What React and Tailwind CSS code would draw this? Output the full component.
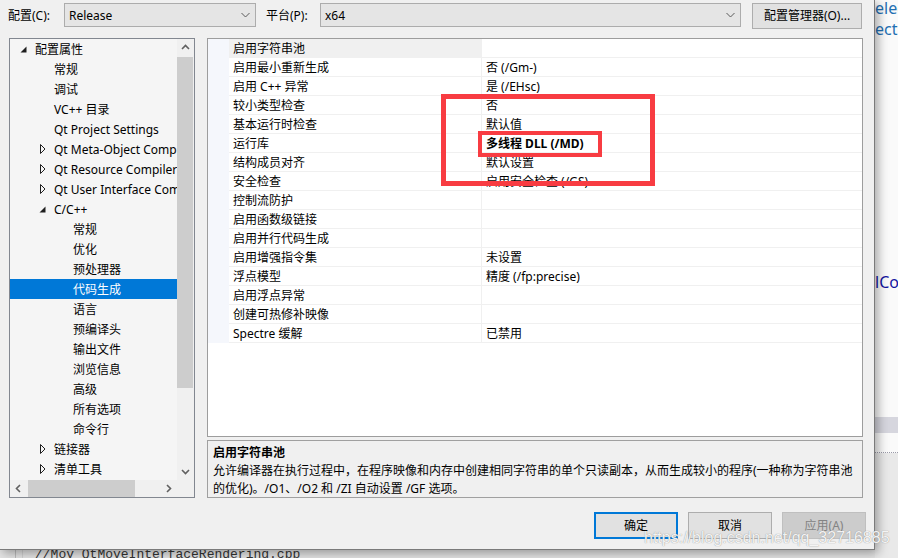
import React from "react"

const ui = "font-['Noto_Sans','Noto_Sans_CJK_SC',sans-serif] text-[12px]"

const treeItems = [
  { label: "配置属性", level: 0, arrow: "open" },
  { label: "常规", level: 1 },
  { label: "调试", level: 1 },
  { label: "VC++ 目录", level: 1 },
  { label: "Qt Project Settings", level: 1 },
  { label: "Qt Meta-Object Compiler", level: 1, arrow: "closed" },
  { label: "Qt Resource Compiler", level: 1, arrow: "closed" },
  { label: "Qt User Interface Compiler", level: 1, arrow: "closed" },
  { label: "C/C++", level: 1, arrow: "open" },
  { label: "常规", level: 2 },
  { label: "优化", level: 2 },
  { label: "预处理器", level: 2 },
  { label: "代码生成", level: 2, selected: true },
  { label: "语言", level: 2 },
  { label: "预编译头", level: 2 },
  { label: "输出文件", level: 2 },
  { label: "浏览信息", level: 2 },
  { label: "高级", level: 2 },
  { label: "所有选项", level: 2 },
  { label: "命令行", level: 2 },
  { label: "链接器", level: 1, arrow: "closed" },
  { label: "清单工具", level: 1, arrow: "closed" },
]

const levelPad = ["pl-[10px]", "pl-[29px]", "pl-[48px]"]

const props = [
  ["启用字符串池", ""],
  ["启用最小重新生成", "否 (/Gm-)"],
  ["启用 C++ 异常", "是 (/EHsc)"],
  ["较小类型检查", "否"],
  ["基本运行时检查", "默认值"],
  ["运行库", "多线程 DLL (/MD)", true],
  ["结构成员对齐", "默认设置"],
  ["安全检查", "启用安全检查 (/GS)"],
  ["控制流防护", ""],
  ["启用函数级链接", ""],
  ["启用并行代码生成", ""],
  ["启用增强指令集", "未设置"],
  ["浮点模型", "精度 (/fp:precise)"],
  ["启用浮点异常", ""],
  ["创建可热修补映像", ""],
  ["Spectre 缓解", "已禁用"],
]

const ScrollArrow = ({ dir }) => {
  const d = {
    up: "M1 6 L4.5 2.5 L8 6",
    down: "M1 3 L4.5 6.5 L8 3",
    left: "M6 1 L2.5 4.5 L6 8",
    right: "M3 1 L6.5 4.5 L3 8",
  }[dir]
  return (
    <svg width="9" height="9" viewBox="0 0 9 9">
      <path d={d} fill="none" stroke="#606060" strokeWidth="1.6" />
    </svg>
  )
}

const SelectChevron = () => (
  <svg width="9" height="6" viewBox="0 0 9 6">
    <path d="M0.5 1 L4.5 5 L8.5 1" fill="none" stroke="#5a5a5a" strokeWidth="1" />
  </svg>
)

const TreeArrow = ({ kind }) => {
  if (kind === "open")
    return (
      <svg width="7" height="7" viewBox="0 0 7 7" className="mt-[1px]">
        <path d="M6.5 0.5 V6.5 H0.5 Z" fill="#1e1e1e" />
      </svg>
    )
  if (kind === "closed")
    return (
      <svg width="6" height="10" viewBox="0 0 6 10" className="ml-[1px]">
        <path d="M0.5 0.5 L5 5 L0.5 9.5 Z" fill="none" stroke="#1e1e1e" strokeWidth="1" />
      </svg>
    )
  return null
}

const Tree = () => (
  <div className="w-[186px] h-[460px] border border-[#828790] flex flex-col">
    <div className="flex flex-1 min-h-0">
      <div className="flex-1 min-w-0 bg-[#f5f5f5] overflow-hidden">
        {treeItems.map((it, i) => (
          <div
            key={i}
            className={`h-[20px] flex items-center whitespace-nowrap ${levelPad[it.level]} ${it.selected ? "bg-[#0078d7] text-white" : "text-black"}`}
          >
            <div className="w-[15px] shrink-0 flex items-center">
              <TreeArrow kind={it.arrow} />
            </div>
            <span className="shrink-0 leading-[20px] pt-[1px]">{it.label}</span>
          </div>
        ))}
      </div>
      <div className="w-[17px] shrink-0 bg-[#f0f0f0] flex flex-col">
        <div className="h-[17px] flex items-center justify-center">
          <ScrollArrow dir="up" />
        </div>
        <div className="mt-[1px] h-[331px] bg-[#cdcdcd] mr-[1px]" />
        <div className="flex-1" />
        <div className="h-[17px] flex items-center justify-center">
          <ScrollArrow dir="down" />
        </div>
      </div>
    </div>
    <div className="h-[17px] flex">
      <div className="flex-1 bg-[#f0f0f0] flex">
        <div className="w-[17px] flex items-center justify-center">
          <ScrollArrow dir="left" />
        </div>
        <div className="ml-[1px] w-[107px] bg-[#cdcdcd]" />
        <div className="flex-1" />
        <div className="w-[17px] flex items-center justify-center">
          <ScrollArrow dir="right" />
        </div>
      </div>
      <div className="w-[17px] bg-[#f0f0f0]" />
    </div>
  </div>
)

const PropGrid = () => (
  <div className="h-[399px] border border-[#9d9d9d] bg-white flex flex-col">
    {props.map(([name, value, bold], i) => (
      <div key={i} className="flex h-[19px]">
        <div className="w-[21px] bg-[#f5f7fc]" />
        <div
          className={`w-[253px] border-b border-r border-[#f0f0f0] pl-[4px] pt-[2px] flex items-center whitespace-nowrap ${i === 0 ? "bg-[#f0f0f0]" : ""}`}
        >
          {name}
        </div>
        <div
          className={`flex-1 border-b border-[#f0f0f0] pl-[4px] pt-[2px] flex items-center whitespace-nowrap ${bold ? "font-bold" : ""}`}
        >
          {value}
        </div>
      </div>
    ))}
  </div>
)

const Description = () => (
  <div className="mt-[3px] h-[58px] border border-[#a0a0a0] bg-[#f0f0f0] pl-[5px] pt-[3px] leading-[18px] whitespace-nowrap">
    <div className="font-bold">启用字符串池</div>
    <div>
      允许编译器在执行过程中，在程序映像和内存中创建相同字符串的单个只读副本，从而生成较小的程序(一种称为字符串池
    </div>
    <div>的优化)。/O1、/O2 和 /ZI 自动设置 /GF 选项。</div>
  </div>
)

export default function App() {
  return (
    <div className={`relative w-[898px] h-[558px] overflow-hidden bg-white text-black ${ui}`}>
      {/* editor behind the dialog */}
      <div className="flex h-full">
        <div className="w-[875px] flex flex-col justify-end bg-[#efefef]">
          <div className="h-[22px] flex bg-[#e4e4e4]">
            <div className="w-[15px]" />
            <div className="w-px bg-[#bdbdbd]" />
            <div className="w-[6px]" />
            <div className="w-px bg-[#d2d2d2]" />
            <div className="pl-[12px] pt-[8px] font-['Liberation_Mono',monospace] text-[13px] leading-[22px] text-[#333]">
              //Mov_QtMoveInterfaceRendering.cpp
            </div>
          </div>
        </div>
        <div className="flex-1 flex flex-col bg-[#fafafa] font-['Noto_Sans',sans-serif] text-[16px] whitespace-nowrap overflow-hidden">
          <div className="leading-[20px] -mt-[2px] text-[#1f6fb2]">elec</div>
          <div className="leading-[22px] text-[#1f6fb2]">ecti</div>
          <div className="h-[232px]" />
          <div className="leading-[20px] text-[#1414a0]">lCo</div>
          <div className="h-[125px]" />
          <div className="h-[16px] bg-[#d6d6de]" />
          <div className="h-[19px]" />
          <div className="border-t border-dotted border-[#9a9aa8]" />
          <div className="flex-1 bg-[#e9e9e9]" />
        </div>
      </div>

      {/* property pages dialog */}
      <div className="absolute left-0 top-0 w-[875px] h-[550px] bg-[#f0f0f0] border-r border-b border-[#7a7a7a] shadow-[3px_3px_10px_rgba(0,0,0,0.35)] flex flex-col">
        <div className="flex items-start pt-[3px] h-[29px]">
          <div className="w-[64px] pl-[8px] h-[24px] leading-[24px] pt-[1px]">配置(C):</div>
          <div className="w-[192px] h-[24px] border border-[#acacac] bg-[#e5e5e5] flex items-center pl-[4px] pr-[5px]">
            <span className="flex-1 pt-[1px]">Release</span>
            <SelectChevron />
          </div>
          <div className="ml-[10px] w-[54px] h-[24px] leading-[24px] pt-[1px]">平台(P):</div>
          <div className="w-[421px] h-[24px] border border-[#acacac] bg-[#e5e5e5] flex items-center pl-[4px] pr-[5px]">
            <span className="flex-1 pt-[1px]">x64</span>
            <SelectChevron />
          </div>
          <button className="ml-[11px] w-[110px] h-[26px] border border-[#adadad] bg-[#e1e1e1]">
            配置管理器(O)...
          </button>
        </div>

        <div className="flex mt-[9px] h-[460px]">
          <div className="ml-[9px]">
            <Tree />
          </div>
          <div className="ml-[12px] w-[656px] flex flex-col">
            <PropGrid />
            <Description />
          </div>
        </div>

        <div className="flex justify-end gap-[10px] mt-[14px] pr-[8px] h-[27px]">
          <button className="w-[84px] h-[27px] border-2 border-[#0078d7] bg-[#e1e1e1]">确定</button>
          <button className="w-[84px] h-[27px] border border-[#adadad] bg-[#e1e1e1]">取消</button>
          <button className="w-[84px] h-[27px] border border-[#bfbfbf] bg-[#cccccc] text-[#838383]">应用(A)</button>
        </div>

        {/* red annotation boxes */}
        <div className="absolute left-[441px] top-[94px] w-[214px] h-[92px] border-[5px] border-[#f83c42]" />
        <div className="absolute left-[478px] top-[131px] w-[124px] h-[26px] border-[4px] border-[#f83c42]" />
      </div>

      {/* watermark */}
      <div className="absolute left-[644px] top-[528px] font-['Liberation_Sans',sans-serif] text-[16px] leading-[20px] text-white/90 [text-shadow:0_0_1px_#777]">
        https://blog.csdn.net/qq_32716885
      </div>
    </div>
  )
}
